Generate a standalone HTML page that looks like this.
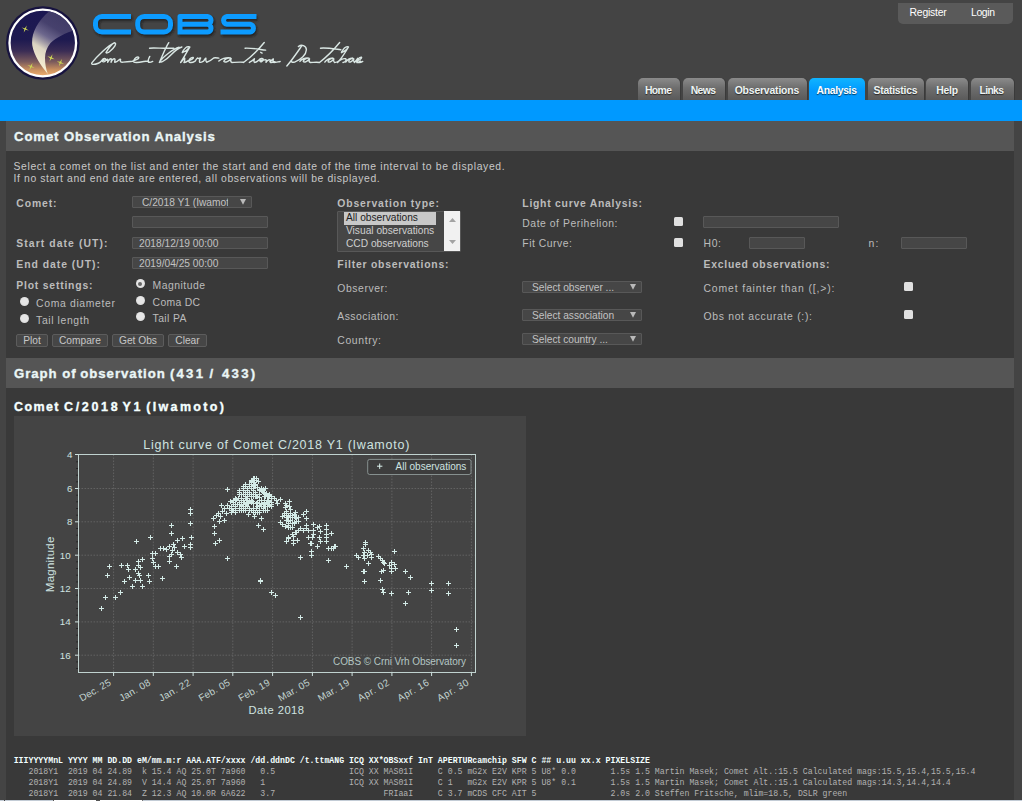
<!DOCTYPE html>
<html><head><meta charset="utf-8"><title>COBS - Comet Observation Analysis</title>
<style>
html,body{margin:0;padding:0;}
body{width:1022px;height:801px;overflow:hidden;background:#444;position:relative;font-family:"Liberation Sans",sans-serif;}
.t{position:absolute;white-space:pre;font-family:"Liberation Sans",sans-serif;}
.b{position:absolute;box-sizing:border-box;}
.m{font-family:"Liberation Mono",monospace;}
svg{position:absolute;overflow:visible;}
</style></head><body>
<div class="b" style="left:0px;top:100px;width:1022px;height:21px;background:#0099ff;"></div>
<div class="b" style="left:6px;top:121px;width:1008px;height:680px;background:#393939;"></div>
<div class="b" style="left:6px;top:121px;width:1008px;height:30px;background:#555;"></div>
<div class="b" style="left:6px;top:358px;width:1008px;height:30px;background:#555;"></div>
<div class="b" style="left:898px;top:3px;width:115px;height:21px;background:#5a5a5a;border-radius:0 0 5px 5px;"></div>
<div class="t " style="left:909.60px;top:8px;font-size:10.4px;line-height:10.4px;letter-spacing:-0.232px;color:#fff;">Register</div>
<div class="t " style="left:971.00px;top:8px;font-size:10.4px;line-height:10.4px;letter-spacing:-0.362px;color:#fff;">Login</div>
<div class="b" style="left:637.8px;top:78px;width:42.7px;height:22px;background:linear-gradient(#8b8b8b,#6e6e6e 45%,#5a5a5a);box-shadow:1px 0 0 #3a3a3a;border-radius:5px 5px 0 0;"></div>
<div class="t " style="left:645.00px;top:86px;font-size:10.4px;line-height:10.4px;font-weight:bold;letter-spacing:-0.632px;color:#eef4f4;text-shadow:0 1px 1px rgba(0,0,0,.6);">Home</div>
<div class="b" style="left:683.2px;top:78px;width:41.9px;height:22px;background:linear-gradient(#8b8b8b,#6e6e6e 45%,#5a5a5a);box-shadow:1px 0 0 #3a3a3a;border-radius:5px 5px 0 0;"></div>
<div class="t " style="left:690.70px;top:86px;font-size:10.4px;line-height:10.4px;font-weight:bold;letter-spacing:-0.589px;color:#eef4f4;text-shadow:0 1px 1px rgba(0,0,0,.6);">News</div>
<div class="b" style="left:727.8px;top:78px;width:79.3px;height:22px;background:linear-gradient(#8b8b8b,#6e6e6e 45%,#5a5a5a);box-shadow:1px 0 0 #3a3a3a;border-radius:5px 5px 0 0;"></div>
<div class="t " style="left:734.70px;top:86px;font-size:10.4px;line-height:10.4px;font-weight:bold;letter-spacing:-0.170px;color:#eef4f4;text-shadow:0 1px 1px rgba(0,0,0,.6);">Observations</div>
<div class="b" style="left:809px;top:78px;width:55.8px;height:22px;background:linear-gradient(#10b4ff,#0099ff 60%);border-radius:5px 5px 0 0;"></div>
<div class="t " style="left:816.50px;top:86px;font-size:10.4px;line-height:10.4px;font-weight:bold;letter-spacing:-0.325px;color:#fff;text-shadow:0 1px 1px rgba(0,0,0,.6);">Analysis</div>
<div class="b" style="left:867.8px;top:78px;width:56.4px;height:22px;background:linear-gradient(#8b8b8b,#6e6e6e 45%,#5a5a5a);box-shadow:1px 0 0 #3a3a3a;border-radius:5px 5px 0 0;"></div>
<div class="t " style="left:873.50px;top:86px;font-size:10.4px;line-height:10.4px;font-weight:bold;letter-spacing:-0.249px;color:#eef4f4;text-shadow:0 1px 1px rgba(0,0,0,.6);">Statistics</div>
<div class="b" style="left:926px;top:78px;width:42.3px;height:22px;background:linear-gradient(#8b8b8b,#6e6e6e 45%,#5a5a5a);box-shadow:1px 0 0 #3a3a3a;border-radius:5px 5px 0 0;"></div>
<div class="t " style="left:936.20px;top:86px;font-size:10.4px;line-height:10.4px;font-weight:bold;letter-spacing:-0.179px;color:#eef4f4;text-shadow:0 1px 1px rgba(0,0,0,.6);">Help</div>
<div class="b" style="left:970.6px;top:78px;width:43px;height:22px;background:linear-gradient(#8b8b8b,#6e6e6e 45%,#5a5a5a);box-shadow:1px 0 0 #3a3a3a;border-radius:5px 5px 0 0;"></div>
<div class="t " style="left:979.50px;top:86px;font-size:10.4px;line-height:10.4px;font-weight:bold;letter-spacing:-0.666px;color:#eef4f4;text-shadow:0 1px 1px rgba(0,0,0,.6);">Links</div>
<div class="t " style="left:14.00px;top:130px;font-size:13.2px;line-height:13.2px;font-weight:bold;letter-spacing:0.871px;color:#eaf6f6;-webkit-text-stroke:0.35px currentColor;">Comet Observation Analysis</div>
<div class="t " style="left:14.00px;top:367px;font-size:13.2px;line-height:13.2px;font-weight:bold;letter-spacing:0.943px;color:#eaf6f6;-webkit-text-stroke:0.35px currentColor;">Graph of</div>
<div class="t " style="left:80.20px;top:367px;font-size:13.2px;line-height:13.2px;font-weight:bold;letter-spacing:0.988px;color:#eaf6f6;-webkit-text-stroke:0.35px currentColor;">observation</div>
<div class="t " style="left:170.00px;top:367px;font-size:13.2px;line-height:13.2px;font-weight:bold;letter-spacing:2.193px;color:#eaf6f6;-webkit-text-stroke:0.35px currentColor;">(431</div>
<div class="t " style="left:209.60px;top:367px;font-size:13.2px;line-height:13.2px;font-weight:bold;color:#eaf6f6;-webkit-text-stroke:0.35px currentColor;">/</div>
<div class="t " style="left:221.90px;top:367px;font-size:13.2px;line-height:13.2px;font-weight:bold;letter-spacing:2.293px;color:#eaf6f6;-webkit-text-stroke:0.35px currentColor;">433)</div>
<div class="t " style="left:14.00px;top:401px;font-size:12.5px;line-height:12.5px;font-weight:bold;letter-spacing:1.402px;color:#f4ffff;-webkit-text-stroke:0.35px currentColor;">Comet</div>
<div class="t " style="left:64.10px;top:401px;font-size:12.5px;line-height:12.5px;font-weight:bold;letter-spacing:2.638px;color:#f4ffff;-webkit-text-stroke:0.35px currentColor;">C/2018</div>
<div class="t " style="left:122.60px;top:401px;font-size:12.5px;line-height:12.5px;font-weight:bold;letter-spacing:2.611px;color:#f4ffff;-webkit-text-stroke:0.35px currentColor;">Y1</div>
<div class="t " style="left:146.30px;top:401px;font-size:12.5px;line-height:12.5px;font-weight:bold;letter-spacing:2.322px;color:#f4ffff;-webkit-text-stroke:0.35px currentColor;">(Iwamoto)</div>
<div class="t " style="left:13.50px;top:162px;font-size:10.4px;line-height:10.4px;letter-spacing:0.633px;color:#c8c8c8;">Select a comet on the list and enter the start and end date of the time interval to be displayed.</div>
<div class="t " style="left:13.50px;top:174px;font-size:10.4px;line-height:10.4px;letter-spacing:0.610px;color:#c8c8c8;">If no start and end date are entered, all observations will be displayed.</div>
<div class="t " style="left:16.30px;top:199px;font-size:10.4px;line-height:10.4px;font-weight:bold;letter-spacing:0.876px;color:#bcbcbc;">Comet:</div>
<div class="t " style="left:16.30px;top:239px;font-size:10.4px;line-height:10.4px;font-weight:bold;letter-spacing:1.073px;color:#bcbcbc;">Start date (UT):</div>
<div class="t " style="left:16.30px;top:260px;font-size:10.4px;line-height:10.4px;font-weight:bold;letter-spacing:0.972px;color:#bcbcbc;">End date (UT):</div>
<div class="t " style="left:16.30px;top:281px;font-size:10.4px;line-height:10.4px;font-weight:bold;letter-spacing:0.795px;color:#bcbcbc;">Plot settings:</div>
<div class="t " style="left:152.60px;top:281px;font-size:10.4px;line-height:10.4px;letter-spacing:0.479px;color:#bcbcbc;">Magnitude</div>
<div class="t " style="left:36.10px;top:299px;font-size:10.4px;line-height:10.4px;letter-spacing:0.650px;color:#bcbcbc;">Coma diameter</div>
<div class="t " style="left:152.60px;top:298px;font-size:10.4px;line-height:10.4px;letter-spacing:0.291px;color:#bcbcbc;">Coma DC</div>
<div class="t " style="left:36.10px;top:316px;font-size:10.4px;line-height:10.4px;letter-spacing:0.607px;color:#bcbcbc;">Tail length</div>
<div class="t " style="left:152.60px;top:314px;font-size:10.4px;line-height:10.4px;letter-spacing:0.384px;color:#bcbcbc;">Tail PA</div>
<div class="t " style="left:337.30px;top:199px;font-size:10.4px;line-height:10.4px;font-weight:bold;letter-spacing:0.830px;color:#bcbcbc;">Observation type:</div>
<div class="t " style="left:337.30px;top:260px;font-size:10.4px;line-height:10.4px;font-weight:bold;letter-spacing:0.773px;color:#bcbcbc;">Filter observations:</div>
<div class="t " style="left:337.30px;top:284px;font-size:10.4px;line-height:10.4px;letter-spacing:0.568px;color:#bcbcbc;">Observer:</div>
<div class="t " style="left:337.30px;top:312px;font-size:10.4px;line-height:10.4px;letter-spacing:0.466px;color:#bcbcbc;">Association:</div>
<div class="t " style="left:337.30px;top:336px;font-size:10.4px;line-height:10.4px;letter-spacing:0.628px;color:#bcbcbc;">Country:</div>
<div class="t " style="left:522.30px;top:199px;font-size:10.4px;line-height:10.4px;font-weight:bold;letter-spacing:0.745px;color:#bcbcbc;">Light curve Analysis:</div>
<div class="t " style="left:522.30px;top:219px;font-size:10.4px;line-height:10.4px;letter-spacing:0.535px;color:#bcbcbc;">Date of Perihelion:</div>
<div class="t " style="left:522.30px;top:239px;font-size:10.4px;line-height:10.4px;letter-spacing:0.514px;color:#bcbcbc;">Fit Curve:</div>
<div class="t " style="left:703.50px;top:239px;font-size:10.4px;line-height:10.4px;letter-spacing:0.658px;color:#bcbcbc;">H0:</div>
<div class="t " style="left:868.50px;top:239px;font-size:10.4px;line-height:10.4px;letter-spacing:1.327px;color:#bcbcbc;">n:</div>
<div class="t " style="left:703.50px;top:260px;font-size:10.4px;line-height:10.4px;font-weight:bold;letter-spacing:0.752px;color:#bcbcbc;">Exclued observations:</div>
<div class="t " style="left:703.50px;top:284px;font-size:10.4px;line-height:10.4px;letter-spacing:0.870px;color:#bcbcbc;">Comet fainter than ([,&gt;):</div>
<div class="t " style="left:703.50px;top:312px;font-size:10.4px;line-height:10.4px;letter-spacing:0.685px;color:#bcbcbc;">Obs not accurate (:):</div>
<div class="b" style="left:132px;top:196px;width:120px;height:12px;background:#464646;border:1px solid #585858;border-radius:1px;"></div>
<div class="t " style="left:142.00px;top:198px;font-size:10.2px;line-height:10.2px;color:#c2c2c2;width:86px;overflow:hidden;">C/2018 Y1 (Iwamoto)</div>
<svg style="left:239.5px;top:198.5px" width="8" height="7"><path d="M0,0H6L3,5.7Z" fill="#b9b9b9"/></svg>
<div class="b" style="left:132px;top:216px;width:136px;height:12px;background:#464646;border:1px solid #585858;border-radius:1px;"></div>
<div class="b" style="left:132px;top:237px;width:136px;height:12px;background:#464646;border:1px solid #585858;border-radius:1px;"></div>
<div class="t " style="left:139.00px;top:239px;font-size:10.2px;line-height:10.2px;color:#c2c2c2;">2018/12/19 00:00</div>
<div class="b" style="left:132px;top:257px;width:136px;height:12px;background:#464646;border:1px solid #585858;border-radius:1px;"></div>
<div class="t " style="left:139.00px;top:259px;font-size:10.2px;line-height:10.2px;color:#c2c2c2;">2019/04/25 00:00</div>
<div class="b" style="left:703px;top:216px;width:136px;height:12px;background:#464646;border:1px solid #585858;border-radius:1px;"></div>
<div class="b" style="left:749px;top:237px;width:56px;height:12px;background:#464646;border:1px solid #585858;border-radius:1px;"></div>
<div class="b" style="left:901px;top:237px;width:66px;height:12px;background:#464646;border:1px solid #585858;border-radius:1px;"></div>
<div class="b" style="left:522px;top:281px;width:120px;height:12px;background:#464646;border:1px solid #585858;border-radius:1px;"></div>
<div class="t " style="left:532.00px;top:283px;font-size:10.2px;line-height:10.2px;color:#c2c2c2;width:86px;overflow:hidden;">Select observer ...</div>
<svg style="left:629.5px;top:283.5px" width="8" height="7"><path d="M0,0H6L3,5.7Z" fill="#b9b9b9"/></svg>
<div class="b" style="left:522px;top:309px;width:120px;height:12px;background:#464646;border:1px solid #585858;border-radius:1px;"></div>
<div class="t " style="left:532.00px;top:311px;font-size:10.2px;line-height:10.2px;color:#c2c2c2;width:86px;overflow:hidden;">Select association</div>
<svg style="left:629.5px;top:311.5px" width="8" height="7"><path d="M0,0H6L3,5.7Z" fill="#b9b9b9"/></svg>
<div class="b" style="left:522px;top:333px;width:120px;height:12px;background:#464646;border:1px solid #585858;border-radius:1px;"></div>
<div class="t " style="left:532.00px;top:335px;font-size:10.2px;line-height:10.2px;color:#c2c2c2;width:86px;overflow:hidden;">Select country ...</div>
<svg style="left:629.5px;top:335.5px" width="8" height="7"><path d="M0,0H6L3,5.7Z" fill="#b9b9b9"/></svg>
<div class="b" style="left:337px;top:211px;width:123.5px;height:40.6px;background:#464646;border:1px solid #585858;border-radius:1px;"></div>
<div class="b" style="left:344px;top:212.3px;width:92px;height:12.7px;background:#c8c8c8;"></div>
<div class="t " style="left:346.00px;top:213px;font-size:10.2px;line-height:10.2px;color:#222;">All observations</div>
<div class="t " style="left:346.00px;top:226px;font-size:10.2px;line-height:10.2px;color:#cfcfcf;">Visual observations</div>
<div class="t " style="left:346.00px;top:239px;font-size:10.2px;line-height:10.2px;color:#cfcfcf;">CCD observations</div>
<div class="b" style="left:444px;top:211px;width:15.5px;height:40.2px;background:#f1f1f1;"></div>
<svg style="left:448.6px;top:218px" width="7" height="4"><path d="M0,4L3.5,0L7,4Z" fill="#a3a3a3"/></svg>
<svg style="left:448.6px;top:240px" width="7" height="4"><path d="M0,0L3.5,4L7,0Z" fill="#a3a3a3"/></svg>
<div class="b" style="left:674px;top:217px;width:9px;height:9px;background:#e0e0e0;border-radius:1.5px;"></div>
<div class="b" style="left:674px;top:238px;width:9px;height:9px;background:#e0e0e0;border-radius:1.5px;"></div>
<div class="b" style="left:904px;top:282px;width:9px;height:9px;background:#e0e0e0;border-radius:1.5px;"></div>
<div class="b" style="left:904px;top:310px;width:9px;height:9px;background:#e0e0e0;border-radius:1.5px;"></div>
<div class="b" style="left:135.8px;top:279.2px;width:9px;height:9px;background:radial-gradient(circle at 50% 45%,#e6e6e6 45%,#cfcfcf 100%);border-radius:50%;"></div>
<div class="b" style="left:138.3px;top:281.7px;width:4px;height:4px;background:#666;border-radius:50%;"></div>
<div class="b" style="left:19.9px;top:296.8px;width:9px;height:9px;background:radial-gradient(circle at 50% 45%,#e6e6e6 45%,#cfcfcf 100%);border-radius:50%;"></div>
<div class="b" style="left:135.8px;top:295.9px;width:9px;height:9px;background:radial-gradient(circle at 50% 45%,#e6e6e6 45%,#cfcfcf 100%);border-radius:50%;"></div>
<div class="b" style="left:19.9px;top:313.8px;width:9px;height:9px;background:radial-gradient(circle at 50% 45%,#e6e6e6 45%,#cfcfcf 100%);border-radius:50%;"></div>
<div class="b" style="left:135.8px;top:312.1px;width:9px;height:9px;background:radial-gradient(circle at 50% 45%,#e6e6e6 45%,#cfcfcf 100%);border-radius:50%;"></div>
<div class="b" style="left:16px;top:334px;width:32px;height:13px;background:#464646;border:1px solid #5c5c5c;border-radius:2px;"></div>
<div class="t " style="left:23.21px;top:336px;font-size:10.2px;line-height:10.2px;color:#c6c6c6;">Plot</div>
<div class="b" style="left:52px;top:334px;width:56px;height:13px;background:#464646;border:1px solid #5c5c5c;border-radius:2px;"></div>
<div class="t " style="left:59.02px;top:336px;font-size:10.2px;line-height:10.2px;color:#c6c6c6;">Compare</div>
<div class="b" style="left:112px;top:334px;width:52px;height:13px;background:#464646;border:1px solid #5c5c5c;border-radius:2px;"></div>
<div class="t " style="left:119.01px;top:336px;font-size:10.2px;line-height:10.2px;color:#c6c6c6;">Get Obs</div>
<div class="b" style="left:168px;top:334px;width:39px;height:13px;background:#464646;border:1px solid #5c5c5c;border-radius:2px;"></div>
<div class="t " style="left:175.31px;top:336px;font-size:10.2px;line-height:10.2px;color:#c6c6c6;">Clear</div>
<div class="b" style="left:0px;top:800px;width:1022px;height:1px;background:#c3ccd6;"></div>
<div class="b" style="left:3.5px;top:800px;width:1.5px;height:1px;background:#444;"></div>
<div class="b" style="left:53px;top:800px;width:1px;height:1px;background:#555;"></div>
<div class="b" style="left:54px;top:800px;width:41.6px;height:1px;background:#fff;"></div>
<div class="b" style="left:95.6px;top:800px;width:4.2px;height:1px;background:#555;"></div>
<div class="b" style="left:99.8px;top:800px;width:42px;height:1px;background:#fff;"></div>
<div class="b" style="left:141.8px;top:800px;width:0.8px;height:1px;background:#777;"></div>
<svg style="left:0;top:0" width="400" height="100" viewBox="0 0 400 100">
<defs>
<linearGradient id="sky" x1="0" y1="0" x2="0" y2="1"><stop offset="0" stop-color="#1b1752"/><stop offset="0.45" stop-color="#1e1a50"/><stop offset="0.62" stop-color="#3a2c55"/><stop offset="0.78" stop-color="#7a5a5c"/><stop offset="0.9" stop-color="#c9905f"/><stop offset="1" stop-color="#f0b070"/></linearGradient>
<linearGradient id="tail" gradientUnits="userSpaceOnUse" x1="34" y1="62" x2="60" y2="20"><stop offset="0" stop-color="#f6efd2"/><stop offset="0.32" stop-color="#e2dbc6" stop-opacity="0.96"/><stop offset="0.58" stop-color="#7f799b" stop-opacity="0.8"/><stop offset="0.8" stop-color="#514b74" stop-opacity="0.8"/><stop offset="1" stop-color="#4b466e" stop-opacity="0.8"/></linearGradient>
<clipPath id="disc"><circle cx="42.8" cy="43" r="32.3"/></clipPath>
<filter id="sh" x="-10%" y="-30%" width="120%" height="180%"><feGaussianBlur stdDeviation="1.1"/></filter>
</defs>
<circle cx="42.8" cy="43" r="36.8" fill="#17133f"/>
<circle cx="42.8" cy="43" r="33.3" fill="url(#sky)" stroke="#fff" stroke-width="2.3"/>
<g clip-path="url(#disc)">
<path d="M47.8,73.9 C41,66 34,55.5 32.3,45.5 C31,35 36,22 49.6,11 L80,8 L80,28.6 C68,31.5 57,36.5 50.5,43 C46.8,47.5 45,52.5 45,58 C45,64 46,69 47.8,73.9 Z" fill="url(#tail)"/>
</g>
<path d="M28.82,30.46L25.57,29.86L23.74,32.62L24.34,29.37L21.58,27.54L24.83,28.14L26.66,25.38L26.06,28.63Z" fill="#ccd455"/>
<path d="M34.62,67.96L31.37,67.36L29.54,70.12L30.14,66.87L27.38,65.04L30.63,65.64L32.46,62.88L31.86,66.13Z" fill="#ccd455"/>
<path d="M54.62,59.26L51.37,58.66L49.54,61.42L50.14,58.17L47.38,56.34L50.63,56.94L52.46,54.18L51.86,57.43Z" fill="#ccd455"/>
<path d="M64.02,64.06L60.77,63.46L58.94,66.22L59.54,62.97L56.78,61.14L60.03,61.74L61.86,58.98L61.26,62.23Z" fill="#ccd455"/>
<path d="M131,16.5H102A6.5,6.5 0 0 0 95.5,23V25.5A6.5,6.5 0 0 0 102,32H131M144.2,16.5H164A6.5,6.5 0 0 1 170.5,23V25.5A6.5,6.5 0 0 1 164,32H144.2A6.5,6.5 0 0 1 137.7,25.5V23A6.5,6.5 0 0 1 144.2,16.5ZM180,32V16.5H207.6A3.9,3.9 0 0 1 207.6,24.25H182M207.6,24.25A3.9,3.9 0 0 1 207.6,32H177.5M256.5,16.5H227A3.9,3.9 0 0 0 227,24.25H250A3.9,3.9 0 0 1 250,32H220.5" transform="translate(1.2,2)" fill="none" stroke="#1c1c1c" stroke-opacity="0.85" stroke-width="5" stroke-linejoin="round" filter="url(#sh)"/>
<path d="M131,16.5H102A6.5,6.5 0 0 0 95.5,23V25.5A6.5,6.5 0 0 0 102,32H131M144.2,16.5H164A6.5,6.5 0 0 1 170.5,23V25.5A6.5,6.5 0 0 1 164,32H144.2A6.5,6.5 0 0 1 137.7,25.5V23A6.5,6.5 0 0 1 144.2,16.5ZM180,32V16.5H207.6A3.9,3.9 0 0 1 207.6,24.25H182M207.6,24.25A3.9,3.9 0 0 1 207.6,32H177.5M256.5,16.5H227A3.9,3.9 0 0 0 227,24.25H250A3.9,3.9 0 0 1 250,32H220.5" fill="none" stroke="#0c9bff" stroke-width="5" stroke-linejoin="round"/>
</svg>
<svg style="left:0;top:0" width="400" height="100" viewBox="0 0 400 100">
<g fill="none" stroke="#e2efec" stroke-width="14.5" stroke-linecap="round" stroke-linejoin="round" stroke-opacity="0.95">
<g transform="translate(85,38) scale(0.09785)"><path d="M215,150 C235,108 282,48 306,50 C326,56 300,100 250,140 C236,152 214,158 215,146 M302,48 C232,80 122,190 70,254 C58,276 100,272 136,258 C156,250 166,236 176,226 M176,226 C186,204 214,204 212,224 C208,248 178,250 178,234 C186,218 206,224 220,228 M220,228 C228,210 238,212 232,248 C245,218 264,204 270,216 C274,228 264,244 266,248 C278,218 298,204 306,216 C310,228 300,244 304,248 C320,250 336,236 346,226 C356,214 368,212 362,228 C358,244 370,250 390,246 C420,240 450,246 486,238 M490,234 C520,228 562,206 546,195 C520,190 488,226 500,246 C520,256 562,248 600,240 C622,236 640,238 652,242 M662,188 C650,210 640,236 650,248 C664,252 680,246 692,240 M856,48 C822,100 792,180 760,250 M660,104 C720,98 800,110 908,104 M962,94 C900,110 790,200 766,240 C770,262 830,222 880,170 C916,134 950,104 990,92"/></g>
<g transform="translate(175,38) scale(0.09785)"><path d="M150,92 C120,80 90,110 74,150 C100,140 140,110 152,92 C130,130 90,200 58,250 M58,250 C70,236 90,214 100,206 C96,222 104,236 92,250 C104,252 122,242 136,232 M136,232 C160,226 200,206 184,198 C160,196 134,228 146,246 C162,256 190,246 206,236 M206,236 C214,222 222,210 230,204 C236,212 252,208 262,204 C254,218 246,236 252,248 C262,252 278,244 292,236 M292,236 C300,224 308,212 316,206 C314,222 314,240 324,248 C350,240 380,218 396,204 C410,200 430,204 448,206 M448,236 C470,216 520,196 566,204 C540,200 496,222 500,240 C514,254 552,238 574,210 C568,226 568,244 580,250 C600,250 650,244 700,248 M912,46 C860,110 770,200 700,250 M716,104 C780,100 860,116 926,124 M760,250 C780,240 800,226 812,212 C806,228 804,244 814,250 C828,250 846,238 858,226 M876,146 l14,8 M858,226 C870,208 900,204 902,220 C900,240 874,250 868,236 C872,222 900,226 920,224 C930,218 936,222 930,248 C944,228 964,216 974,226 C978,236 970,246 976,250 C992,252 1010,246 1022,242"/></g>
<g transform="translate(270,38) scale(0.09785)"><path d="M0,240 C14,232 26,220 34,214 C30,228 30,244 40,250 C58,250 80,244 104,240 M326,78 C290,130 230,220 172,286 M290,88 C320,64 370,74 372,120 C370,170 318,222 252,246 C230,252 214,246 220,234 M306,240 C320,218 360,198 398,206 C376,202 336,222 340,240 C352,254 386,238 404,212 C398,228 398,244 410,250 C440,250 480,246 506,250 M712,46 C660,110 570,200 506,250 M516,104 C580,98 660,112 724,120 M560,246 C574,222 612,200 648,208 C628,204 590,224 594,242 C606,254 636,238 652,214 C648,230 648,244 658,250 C670,250 684,246 694,240 M800,92 C780,84 750,110 730,150 C760,140 796,108 802,92 C780,130 730,210 690,250 C714,226 750,206 774,212 C786,222 770,246 746,250 M774,246 C790,224 822,204 850,208 C832,206 802,224 806,242 C816,254 842,238 856,214 C852,230 852,244 862,250 M862,250 C874,238 888,220 896,208 C892,222 900,238 888,250 C900,252 914,244 924,236 M876,240 C900,234 948,206 934,196 C912,194 884,228 896,246 C910,256 934,248 948,240"/></g>
</g></svg>
<svg style="left:0;top:0" width="1022" height="801" viewBox="0 0 1022 801">
<rect x="14" y="416" width="512" height="320" fill="#444"/>
<path d="M113.6,454.5V672.5M153.3,454.5V672.5M193.1,454.5V672.5M232.8,454.5V672.5M272.6,454.5V672.5M312.4,454.5V672.5M352.1,454.5V672.5M391.9,454.5V672.5M431.6,454.5V672.5M471.4,454.5V672.5M78.5,488.5H475.5M78.5,521.8H475.5M78.5,555.2H475.5M78.5,588.5H475.5M78.5,621.9H475.5M78.5,655.2H475.5" stroke="#6c6c6c" stroke-width="0.75" stroke-dasharray="1.6,1.4" fill="none"/>
<path d="M99.0,608.5h5M101.5,606.0v5M103.0,597.5h5M105.5,595.0v5M113.0,597.5h5M115.5,595.0v5M118.0,592.5h5M120.5,590.0v5M105.0,575.5h5M107.5,573.0v5M107.0,566.5h5M109.5,564.0v5M119.0,565.5h5M121.5,563.0v5M125.0,565.5h5M127.5,563.0v5M126.0,569.5h5M128.5,567.0v5M127.0,577.5h5M129.5,575.0v5M122.0,581.5h5M124.5,579.0v5M130.0,586.5h5M132.5,584.0v5M133.0,580.5h5M135.5,578.0v5M138.0,580.5h5M140.5,578.0v5M140.0,586.5h5M142.5,584.0v5M134.0,541.5h5M136.5,539.0v5M133.0,569.5h5M135.5,567.0v5M136.0,561.5h5M138.5,559.0v5M136.0,565.5h5M138.5,563.0v5M136.0,573.5h5M138.5,571.0v5M138.0,567.5h5M140.5,565.0v5M140.0,559.5h5M142.5,557.0v5M137.0,575.5h5M139.5,573.0v5M146.0,575.5h5M148.5,573.0v5M147.0,581.5h5M149.5,579.0v5M148.0,537.5h5M150.5,535.0v5M150.0,553.5h5M152.5,551.0v5M153.0,553.5h5M155.5,551.0v5M150.0,558.5h5M152.5,556.0v5M151.0,562.5h5M153.5,560.0v5M153.0,566.5h5M155.5,564.0v5M156.0,566.5h5M158.5,564.0v5M160.0,578.5h5M162.5,576.0v5M158.0,548.5h5M160.5,546.0v5M161.0,548.5h5M163.5,546.0v5M164.0,549.5h5M166.5,547.0v5M169.0,525.5h5M171.5,523.0v5M169.0,533.5h5M171.5,531.0v5M167.0,546.5h5M169.5,544.0v5M171.0,544.5h5M173.5,542.0v5M172.0,547.5h5M174.5,545.0v5M170.0,550.5h5M172.5,548.0v5M175.0,540.5h5M177.5,538.0v5M167.0,556.5h5M169.5,554.0v5M169.0,554.5h5M171.5,552.0v5M167.0,561.5h5M169.5,559.0v5M175.0,552.5h5M177.5,550.0v5M174.0,566.5h5M176.5,564.0v5M178.0,554.5h5M180.5,552.0v5M179.0,557.5h5M181.5,555.0v5M180.0,538.5h5M182.5,536.0v5M182.0,546.5h5M184.5,544.0v5M188.0,509.5h5M190.5,507.0v5M188.0,513.5h5M190.5,511.0v5M188.0,523.5h5M190.5,521.0v5M189.0,537.5h5M191.5,535.0v5M188.0,544.5h5M190.5,542.0v5M188.0,547.5h5M190.5,545.0v5M225.0,489.5h5M227.5,487.0v5M219.0,505.5h5M221.5,503.0v5M212.0,526.5h5M214.5,524.0v5M212.0,533.5h5M214.5,531.0v5M213.0,543.5h5M215.5,541.0v5M217.0,540.5h5M219.5,538.0v5M225.0,558.5h5M227.5,556.0v5M258.0,580.5h5M260.5,578.0v5M258.0,581.5h5M260.5,579.0v5M269.0,592.5h5M271.5,590.0v5M273.0,595.5h5M275.5,593.0v5M298.0,617.5h5M300.5,615.0v5M298.0,557.5h5M300.5,555.0v5M326.0,560.5h5M328.5,558.0v5M309.0,551.5h5M311.5,549.0v5M309.0,555.5h5M311.5,553.0v5M309.0,543.5h5M311.5,541.0v5M315.0,546.5h5M317.5,544.0v5M326.0,548.5h5M328.5,546.0v5M331.0,548.5h5M333.5,546.0v5M333.0,546.5h5M335.5,544.0v5M329.0,533.5h5M331.5,531.0v5M256.0,525.5h5M258.5,523.0v5M261.0,529.5h5M263.5,527.0v5M259.0,518.5h5M261.5,516.0v5M252.0,516.5h5M254.5,514.0v5M246.0,514.5h5M248.5,512.0v5M284.0,541.5h5M286.5,539.0v5M286.0,538.5h5M288.5,536.0v5M291.0,540.5h5M293.5,538.0v5M295.0,540.5h5M297.5,538.0v5M291.0,543.5h5M293.5,541.0v5M344.0,566.5h5M346.5,564.0v5M363.0,542.5h5M365.5,540.0v5M363.0,544.5h5M365.5,542.0v5M361.0,548.5h5M363.5,546.0v5M366.0,550.5h5M368.5,548.0v5M362.0,552.5h5M364.5,550.0v5M368.0,552.5h5M370.5,550.0v5M369.0,554.5h5M371.5,552.0v5M365.0,555.5h5M367.5,553.0v5M361.0,555.5h5M363.5,553.0v5M354.0,555.5h5M356.5,553.0v5M356.0,557.5h5M358.5,555.0v5M362.0,558.5h5M364.5,556.0v5M369.0,557.5h5M371.5,555.0v5M366.0,563.5h5M368.5,561.0v5M361.0,571.5h5M363.5,569.0v5M362.0,571.5h5M364.5,569.0v5M362.0,581.5h5M364.5,579.0v5M376.0,556.5h5M378.5,554.0v5M378.0,558.5h5M380.5,556.0v5M380.0,560.5h5M382.5,558.0v5M381.0,562.5h5M383.5,560.0v5M382.0,563.5h5M384.5,561.0v5M381.0,570.5h5M383.5,568.0v5M379.0,571.5h5M381.5,569.0v5M378.0,580.5h5M380.5,578.0v5M380.0,589.5h5M382.5,587.0v5M381.0,592.5h5M383.5,590.0v5M392.0,551.5h5M394.5,549.0v5M389.0,562.5h5M391.5,560.0v5M392.0,564.5h5M394.5,562.0v5M387.0,565.5h5M389.5,563.0v5M389.0,568.5h5M391.5,566.0v5M393.0,568.5h5M395.5,566.0v5M389.0,571.5h5M391.5,569.0v5M389.0,593.5h5M391.5,591.0v5M403.0,571.5h5M405.5,569.0v5M408.0,577.5h5M410.5,575.0v5M406.0,592.5h5M408.5,590.0v5M403.0,603.5h5M405.5,601.0v5M429.0,583.5h5M431.5,581.0v5M429.0,590.5h5M431.5,588.0v5M446.0,583.5h5M448.5,581.0v5M446.0,593.5h5M448.5,591.0v5M454.0,629.5h5M456.5,627.0v5M454.0,645.5h5M456.5,643.0v5M211.0,518.5h5M213.5,516.0v5M214.0,515.5h5M216.5,513.0v5M216.0,513.5h5M218.5,511.0v5M218.0,516.5h5M220.5,514.0v5M220.0,511.5h5M222.5,509.0v5M222.0,508.5h5M224.5,506.0v5M224.0,513.5h5M226.5,511.0v5M225.0,505.5h5M227.5,503.0v5M227.0,508.5h5M229.5,506.0v5M228.0,501.5h5M230.5,499.0v5M229.0,506.5h5M231.5,504.0v5M230.0,510.5h5M232.5,508.0v5M222.0,520.5h5M224.5,518.0v5M217.0,521.5h5M219.5,519.0v5M229.0,510.5h5M231.5,508.0v5M229.0,512.5h5M231.5,510.0v5M231.0,500.5h5M233.5,498.0v5M231.0,502.5h5M233.5,500.0v5M231.0,504.5h5M233.5,502.0v5M231.0,510.5h5M233.5,508.0v5M233.0,498.5h5M235.5,496.0v5M233.0,500.5h5M235.5,498.0v5M233.0,504.5h5M235.5,502.0v5M233.0,506.5h5M235.5,504.0v5M233.0,508.5h5M235.5,506.0v5M233.0,510.5h5M235.5,508.0v5M233.0,512.5h5M235.5,510.0v5M235.0,504.5h5M237.5,502.0v5M237.0,490.5h5M239.5,488.0v5M237.0,492.5h5M239.5,490.0v5M237.0,494.5h5M239.5,492.0v5M237.0,502.5h5M239.5,500.0v5M237.0,508.5h5M239.5,506.0v5M237.0,510.5h5M239.5,508.0v5M239.0,494.5h5M241.5,492.0v5M239.0,500.5h5M241.5,498.0v5M239.0,502.5h5M241.5,500.0v5M239.0,504.5h5M241.5,502.0v5M239.0,510.5h5M241.5,508.0v5M241.0,486.5h5M243.5,484.0v5M241.0,488.5h5M243.5,486.0v5M241.0,490.5h5M243.5,488.0v5M241.0,494.5h5M243.5,492.0v5M241.0,500.5h5M243.5,498.0v5M241.0,504.5h5M243.5,502.0v5M241.0,508.5h5M243.5,506.0v5M241.0,510.5h5M243.5,508.0v5M243.0,484.5h5M245.5,482.0v5M243.0,486.5h5M245.5,484.0v5M243.0,492.5h5M245.5,490.0v5M243.0,496.5h5M245.5,494.0v5M243.0,498.5h5M245.5,496.0v5M243.0,504.5h5M245.5,502.0v5M243.0,508.5h5M245.5,506.0v5M243.0,510.5h5M245.5,508.0v5M245.0,488.5h5M247.5,486.0v5M245.0,490.5h5M247.5,488.0v5M245.0,492.5h5M247.5,490.0v5M245.0,496.5h5M247.5,494.0v5M245.0,500.5h5M247.5,498.0v5M245.0,502.5h5M247.5,500.0v5M245.0,506.5h5M247.5,504.0v5M247.0,484.5h5M249.5,482.0v5M247.0,486.5h5M249.5,484.0v5M247.0,492.5h5M249.5,490.0v5M247.0,494.5h5M249.5,492.0v5M247.0,500.5h5M249.5,498.0v5M247.0,508.5h5M249.5,506.0v5M247.0,510.5h5M249.5,508.0v5M249.0,480.5h5M251.5,478.0v5M249.0,484.5h5M251.5,482.0v5M249.0,488.5h5M251.5,486.0v5M249.0,494.5h5M251.5,492.0v5M249.0,496.5h5M251.5,494.0v5M249.0,500.5h5M251.5,498.0v5M249.0,502.5h5M251.5,500.0v5M249.0,510.5h5M251.5,508.0v5M251.0,478.5h5M253.5,476.0v5M251.0,480.5h5M253.5,478.0v5M251.0,482.5h5M253.5,480.0v5M251.0,486.5h5M253.5,484.0v5M251.0,488.5h5M253.5,486.0v5M251.0,490.5h5M253.5,488.0v5M251.0,494.5h5M253.5,492.0v5M251.0,496.5h5M253.5,494.0v5M251.0,508.5h5M253.5,506.0v5M251.0,510.5h5M253.5,508.0v5M251.0,512.5h5M253.5,510.0v5M253.0,484.5h5M255.5,482.0v5M253.0,492.5h5M255.5,490.0v5M253.0,496.5h5M255.5,494.0v5M253.0,512.5h5M255.5,510.0v5M255.0,496.5h5M257.5,494.0v5M255.0,502.5h5M257.5,500.0v5M255.0,512.5h5M257.5,510.0v5M257.0,490.5h5M259.5,488.0v5M257.0,494.5h5M259.5,492.0v5M257.0,500.5h5M259.5,498.0v5M257.0,510.5h5M259.5,508.0v5M257.0,512.5h5M259.5,510.0v5M259.0,488.5h5M261.5,486.0v5M259.0,490.5h5M261.5,488.0v5M259.0,500.5h5M261.5,498.0v5M259.0,504.5h5M261.5,502.0v5M259.0,506.5h5M261.5,504.0v5M261.0,490.5h5M263.5,488.0v5M261.0,492.5h5M263.5,490.0v5M261.0,504.5h5M263.5,502.0v5M261.0,506.5h5M263.5,504.0v5M261.0,508.5h5M263.5,506.0v5M261.0,510.5h5M263.5,508.0v5M263.0,488.5h5M265.5,486.0v5M263.0,496.5h5M265.5,494.0v5M263.0,504.5h5M265.5,502.0v5M263.0,506.5h5M265.5,504.0v5M263.0,510.5h5M265.5,508.0v5M265.0,496.5h5M267.5,494.0v5M265.0,500.5h5M267.5,498.0v5M265.0,502.5h5M267.5,500.0v5M265.0,504.5h5M267.5,502.0v5M265.0,506.5h5M267.5,504.0v5M265.0,510.5h5M267.5,508.0v5M267.0,494.5h5M269.5,492.0v5M267.0,496.5h5M269.5,494.0v5M269.0,498.5h5M271.5,496.0v5M269.0,502.5h5M271.5,500.0v5M269.0,504.5h5M271.5,502.0v5M269.0,506.5h5M271.5,504.0v5M257.0,489.5h5M259.5,487.0v5M241.0,494.5h5M243.5,492.0v5M257.0,497.5h5M259.5,495.0v5M254.0,503.5h5M256.5,501.0v5M246.0,503.5h5M248.5,501.0v5M264.0,493.5h5M266.5,491.0v5M265.0,503.5h5M267.5,501.0v5M236.0,498.5h5M238.5,496.0v5M254.0,508.5h5M256.5,506.0v5M245.0,498.5h5M247.5,496.0v5M263.0,504.5h5M265.5,502.0v5M265.0,500.5h5M267.5,498.0v5M255.0,487.5h5M257.5,485.0v5M257.0,505.5h5M259.5,503.0v5M255.0,502.5h5M257.5,500.0v5M239.0,506.5h5M241.5,504.0v5M267.0,505.5h5M269.5,503.0v5M251.0,503.5h5M253.5,501.0v5M243.0,506.5h5M245.5,504.0v5M262.0,496.5h5M264.5,494.0v5M234.0,499.5h5M236.5,497.0v5M251.0,503.5h5M253.5,501.0v5M249.0,482.5h5M251.5,480.0v5M261.0,489.5h5M263.5,487.0v5M260.0,491.5h5M262.5,489.0v5M244.0,503.5h5M246.5,501.0v5M237.0,492.5h5M239.5,490.0v5M250.0,501.5h5M252.5,499.0v5M262.0,502.5h5M264.5,500.0v5M266.0,500.5h5M268.5,498.0v5M266.0,495.5h5M268.5,493.0v5M239.0,498.5h5M241.5,496.0v5M242.0,502.5h5M244.5,500.0v5M254.0,496.5h5M256.5,494.0v5M262.0,500.5h5M264.5,498.0v5M243.0,494.5h5M245.5,492.0v5M262.0,506.5h5M264.5,504.0v5M239.0,505.5h5M241.5,503.0v5M266.0,501.5h5M268.5,499.0v5M252.0,485.5h5M254.5,483.0v5M250.0,480.5h5M252.5,478.0v5M252.0,478.5h5M254.5,476.0v5M254.0,478.5h5M256.5,476.0v5M252.0,480.5h5M254.5,478.0v5M254.0,480.5h5M256.5,478.0v5M256.0,481.5h5M258.5,479.0v5M249.0,481.5h5M251.5,479.0v5M244.0,498.5h5M246.5,496.0v5M247.0,500.5h5M249.5,498.0v5M251.0,503.5h5M253.5,501.0v5M255.0,506.5h5M257.5,504.0v5M259.0,503.5h5M261.5,501.0v5M266.0,495.5h5M268.5,493.0v5M269.0,496.5h5M271.5,494.0v5M272.0,498.5h5M274.5,496.0v5M274.0,500.5h5M276.5,498.0v5M280.0,516.5h5M282.5,514.0v5M280.0,524.5h5M282.5,522.0v5M283.0,507.5h5M285.5,505.0v5M282.0,513.5h5M284.5,511.0v5M282.0,515.5h5M284.5,513.0v5M283.0,526.5h5M285.5,524.0v5M284.0,505.5h5M286.5,503.0v5M284.0,511.5h5M286.5,509.0v5M284.0,513.5h5M286.5,511.0v5M285.0,517.5h5M287.5,515.0v5M284.0,520.5h5M286.5,518.0v5M287.0,506.5h5M289.5,504.0v5M286.0,516.5h5M288.5,514.0v5M286.0,521.5h5M288.5,519.0v5M286.0,523.5h5M288.5,521.0v5M286.0,525.5h5M288.5,523.0v5M286.0,527.5h5M288.5,525.0v5M288.0,509.5h5M290.5,507.0v5M288.0,513.5h5M290.5,511.0v5M288.0,515.5h5M290.5,513.0v5M288.0,517.5h5M290.5,515.0v5M288.0,520.5h5M290.5,518.0v5M288.0,527.5h5M290.5,525.0v5M290.0,515.5h5M292.5,513.0v5M290.0,517.5h5M292.5,515.0v5M290.0,523.5h5M292.5,521.0v5M290.0,527.5h5M292.5,525.0v5M293.0,512.5h5M295.5,510.0v5M292.0,514.5h5M294.5,512.0v5M292.0,515.5h5M294.5,513.0v5M293.0,517.5h5M295.5,515.0v5M292.0,522.5h5M294.5,520.0v5M292.0,523.5h5M294.5,521.0v5M294.0,518.5h5M296.5,516.0v5M294.0,521.5h5M296.5,519.0v5M294.0,532.5h5M296.5,530.0v5M296.0,517.5h5M298.5,515.0v5M296.0,521.5h5M298.5,519.0v5M296.0,530.5h5M298.5,528.0v5M278.0,499.5h5M280.5,497.0v5M275.0,503.5h5M277.5,501.0v5M283.0,503.5h5M285.5,501.0v5M287.0,501.5h5M289.5,499.0v5M278.0,522.5h5M280.5,520.0v5M283.0,526.5h5M285.5,524.0v5M304.0,511.5h5M306.5,509.0v5M301.0,514.5h5M303.5,512.0v5M304.0,518.5h5M306.5,516.0v5M304.0,525.5h5M306.5,523.0v5M304.0,528.5h5M306.5,526.0v5M298.0,528.5h5M300.5,526.0v5M301.0,530.5h5M303.5,528.0v5M306.0,530.5h5M308.5,528.0v5M311.0,524.5h5M313.5,522.0v5M315.0,527.5h5M317.5,525.0v5M317.0,526.5h5M319.5,524.0v5M311.0,530.5h5M313.5,528.0v5M311.0,534.5h5M313.5,532.0v5M318.0,531.5h5M320.5,529.0v5M306.0,537.5h5M308.5,535.0v5M310.0,537.5h5M312.5,535.0v5M317.0,537.5h5M319.5,535.0v5M318.0,541.5h5M320.5,539.0v5M308.0,543.5h5M310.5,541.0v5M315.0,546.5h5M317.5,544.0v5M324.0,525.5h5M326.5,523.0v5M324.0,529.5h5M326.5,527.0v5M324.0,534.5h5M326.5,532.0v5M324.0,537.5h5M326.5,535.0v5M324.0,541.5h5M326.5,539.0v5M329.0,533.5h5M331.5,531.0v5M326.0,548.5h5M328.5,546.0v5M329.0,548.5h5M331.5,546.0v5M332.0,546.5h5M334.5,544.0v5M284.0,541.5h5M286.5,539.0v5M286.0,537.5h5M288.5,535.0v5M291.0,536.5h5M293.5,534.0v5M291.0,540.5h5M293.5,538.0v5M291.0,543.5h5M293.5,541.0v5M295.0,540.5h5M297.5,538.0v5M290.0,534.5h5M292.5,532.0v5M293.0,532.5h5M295.5,530.0v5" stroke="#d4ebe7" stroke-width="1" fill="none"/>
<rect x="78.5" y="454.5" width="397.0" height="218.0" fill="none" stroke="#c0d2cf" stroke-width="1"/>
<path d="M113.6,672.5v3.5M153.3,672.5v3.5M193.1,672.5v3.5M232.8,672.5v3.5M272.6,672.5v3.5M312.4,672.5v3.5M352.1,672.5v3.5M391.9,672.5v3.5M431.6,672.5v3.5M471.4,672.5v3.5M78.5,454.5h-3.5M78.5,488.5h-3.5M78.5,521.8h-3.5M78.5,555.2h-3.5M78.5,588.5h-3.5M78.5,621.9h-3.5M78.5,655.2h-3.5" stroke="#cfe3e0" stroke-width="1" fill="none"/>
<path d="M77.9,461.8h-1.6M77.9,468.5h-1.6M77.9,475.2h-1.6M77.9,481.8h-1.6M77.9,495.2h-1.6M77.9,501.8h-1.6M77.9,508.5h-1.6M77.9,515.2h-1.6M77.9,528.5h-1.6M77.9,535.2h-1.6M77.9,541.8h-1.6M77.9,548.5h-1.6M77.9,561.8h-1.6M77.9,568.5h-1.6M77.9,575.2h-1.6M77.9,581.9h-1.6M77.9,595.2h-1.6M77.9,601.9h-1.6M77.9,608.5h-1.6M77.9,615.2h-1.6M77.9,628.5h-1.6M77.9,635.2h-1.6M77.9,641.9h-1.6M77.9,648.5h-1.6M77.9,661.9h-1.6M77.9,668.5h-1.6" stroke="#1e1e1e" stroke-width="1" fill="none"/>
<rect x="367.7" y="459.4" width="103.3" height="15.1" rx="2" fill="#3d3d3d" stroke="#8f9a98" stroke-width="0.9"/>
<path d="M377,466.2h5.4M379.7,463.5v5.4" stroke="#dcf2ee" stroke-width="1" fill="none"/>
<text x="395.6" y="469.6" font-size="10" text-anchor="start" fill="#cfe3e0" textLength="70.7" lengthAdjust="spacing" style="font-family:&quot;Liberation Sans&quot;,sans-serif;" >All observations</text>
<text x="466.0" y="664.8" font-size="10" text-anchor="end" fill="#cfe3e0" textLength="133.0" lengthAdjust="spacing" style="font-family:&quot;Liberation Sans&quot;,sans-serif;" fill-opacity="0.82">COBS © Crni Vrh Observatory</text>
<text x="276.3" y="448.7" font-size="12.5" text-anchor="middle" fill="#cfe3e0" textLength="266.0" lengthAdjust="spacing" style="font-family:&quot;Liberation Sans&quot;,sans-serif;" >Light curve of Comet C/2018 Y1 (Iwamoto)</text>
<text x="276.3" y="714.3" font-size="11.2" text-anchor="middle" fill="#cfe3e0" textLength="55.5" lengthAdjust="spacing" style="font-family:&quot;Liberation Sans&quot;,sans-serif;" >Date 2018</text>
<text transform="translate(54.2,564.4) rotate(-90)" font-size="11.5" text-anchor="middle" fill="#cfe3e0" textLength="55.5" style="font-family:&quot;Liberation Sans&quot;,sans-serif;">Magnitude</text>
<text x="72.4" y="458.0" font-size="9.8" text-anchor="end" fill="#cfe3e0" style="font-family:&quot;Liberation Sans&quot;,sans-serif;" >4</text>
<text x="72.4" y="492.0" font-size="9.8" text-anchor="end" fill="#cfe3e0" style="font-family:&quot;Liberation Sans&quot;,sans-serif;" >6</text>
<text x="72.4" y="525.3" font-size="9.8" text-anchor="end" fill="#cfe3e0" style="font-family:&quot;Liberation Sans&quot;,sans-serif;" >8</text>
<text x="70.6" y="558.7" font-size="9.8" text-anchor="end" fill="#cfe3e0" style="font-family:&quot;Liberation Sans&quot;,sans-serif;" >10</text>
<text x="70.6" y="592.0" font-size="9.8" text-anchor="end" fill="#cfe3e0" style="font-family:&quot;Liberation Sans&quot;,sans-serif;" >12</text>
<text x="70.6" y="625.4" font-size="9.8" text-anchor="end" fill="#cfe3e0" style="font-family:&quot;Liberation Sans&quot;,sans-serif;" >14</text>
<text x="70.6" y="658.7" font-size="9.8" text-anchor="end" fill="#cfe3e0" style="font-family:&quot;Liberation Sans&quot;,sans-serif;" >16</text>
<text transform="translate(111.6,684.6) rotate(-30)" font-size="9.8" text-anchor="end" fill="#c3d5d2" textLength="34.5" style="font-family:&quot;Liberation Sans&quot;,sans-serif;">Dec. 25</text>
<text transform="translate(151.3,684.6) rotate(-30)" font-size="9.8" text-anchor="end" fill="#c3d5d2" textLength="34.5" style="font-family:&quot;Liberation Sans&quot;,sans-serif;">Jan. 08</text>
<text transform="translate(191.1,684.6) rotate(-30)" font-size="9.8" text-anchor="end" fill="#c3d5d2" textLength="34.5" style="font-family:&quot;Liberation Sans&quot;,sans-serif;">Jan. 22</text>
<text transform="translate(230.8,684.6) rotate(-30)" font-size="9.8" text-anchor="end" fill="#c3d5d2" textLength="34.5" style="font-family:&quot;Liberation Sans&quot;,sans-serif;">Feb. 05</text>
<text transform="translate(270.6,684.6) rotate(-30)" font-size="9.8" text-anchor="end" fill="#c3d5d2" textLength="34.5" style="font-family:&quot;Liberation Sans&quot;,sans-serif;">Feb. 19</text>
<text transform="translate(310.4,684.6) rotate(-30)" font-size="9.8" text-anchor="end" fill="#c3d5d2" textLength="34.5" style="font-family:&quot;Liberation Sans&quot;,sans-serif;">Mar. 05</text>
<text transform="translate(350.1,684.6) rotate(-30)" font-size="9.8" text-anchor="end" fill="#c3d5d2" textLength="34.5" style="font-family:&quot;Liberation Sans&quot;,sans-serif;">Mar. 19</text>
<text transform="translate(389.9,684.6) rotate(-30)" font-size="9.8" text-anchor="end" fill="#c3d5d2" textLength="34.5" style="font-family:&quot;Liberation Sans&quot;,sans-serif;">Apr. 02</text>
<text transform="translate(429.6,684.6) rotate(-30)" font-size="9.8" text-anchor="end" fill="#c3d5d2" textLength="34.5" style="font-family:&quot;Liberation Sans&quot;,sans-serif;">Apr. 16</text>
<text transform="translate(469.4,684.6) rotate(-30)" font-size="9.8" text-anchor="end" fill="#c3d5d2" textLength="34.5" style="font-family:&quot;Liberation Sans&quot;,sans-serif;">Apr. 30</text>
</svg>
<div class="t m" style="left:13.7px;top:757.00px;font-size:8.22px;line-height:8.22px;font-weight:bold;color:#f4ffff;">IIIYYYYMnL YYYY MM DD.DD eM/mm.m:r AAA.ATF/xxxx /dd.ddnDC /t.ttmANG ICQ XX*OBSxxf InT APERTURcamchip SFW C ## u.uu xx.x PIXELSIZE</div>
<div class="t m" style="left:13.7px;top:768.00px;font-size:8.22px;line-height:8.22px;color:#b2b2b2;">   2018Y1  2019 04 24.89  k 15.4 AQ 25.0T 7a960   0.5               ICQ XX MAS01I     C 0.5 mG2x E2V KPR 5 U8* 0.0       1.5s 1.5 Martin Masek; Comet Alt.:15.5 Calculated mags:15.5,15.4,15.5,15.4</div>
<div class="t m" style="left:13.7px;top:779.00px;font-size:8.22px;line-height:8.22px;color:#b2b2b2;">   2018Y1  2019 04 24.89  V 14.4 AQ 25.0T 7a960   1                 ICQ XX MAS01I     C 1   mG2x E2V KPR 5 U8* 0.1       1.5s 1.5 Martin Masek; Comet Alt.:15.1 Calculated mags:14.3,14.4,14.4</div>
<div class="t m" style="left:13.7px;top:790.00px;font-size:8.22px;line-height:8.22px;color:#b2b2b2;">   2018Y1  2019 04 21.84  Z 12.3 AQ 10.0R 6A622   3.7                      FRIaaI     C 3.7 mCDS CFC AIT 5               2.0s 2.0 Steffen Fritsche, mlim=18.5, DSLR green</div>
</body></html>
